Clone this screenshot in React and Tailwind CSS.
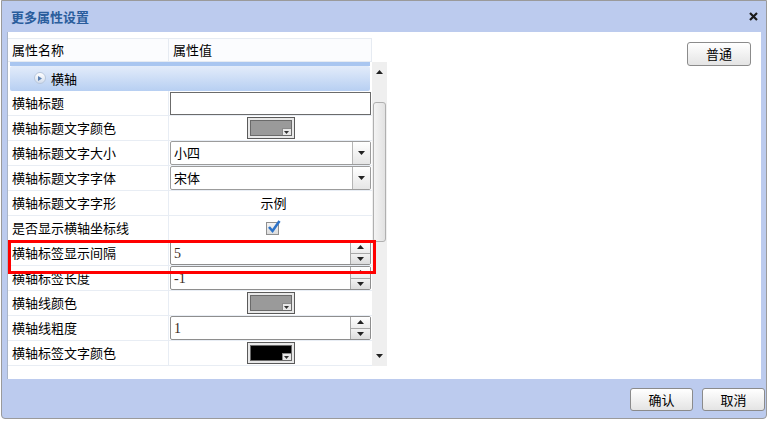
import React from "react";

const font = { fontFamily: '"Noto Sans CJK SC", "Liberation Sans", sans-serif' };

const rows = [
  { label: "横轴标题", type: "text", value: "" },
  { label: "横轴标题文字颜色", type: "color", color: "#9a9a9a" },
  { label: "横轴标题文字大小", type: "select", value: "小四" },
  { label: "横轴标题文字字体", type: "select", value: "宋体" },
  { label: "横轴标题文字字形", type: "sample", value: "示例" },
  { label: "是否显示横轴坐标线", type: "check" },
  { label: "横轴标签显示间隔", type: "spin", value: "5" },
  { label: "横轴标签长度", type: "spin", value: "-1" },
  { label: "横轴线颜色", type: "color", color: "#9a9a9a" },
  { label: "横轴线粗度", type: "spin", value: "1" },
  { label: "横轴标签文字颜色", type: "color", color: "#000000" },
];

const Tri = ({ up = false, size = 7 }) => (
  <svg width={size} height={4} viewBox="0 0 7 4">
    {up ? <path d="M0 4 L3.5 0 L7 4 Z" fill="#222" /> : <path d="M0 0 L7 0 L3.5 4 Z" fill="#222" />}
  </svg>
);

const Value = ({ row }) => {
  if (row.type === "text") {
    return <div className="h-[23px] w-full border border-[#6b6b6b] bg-white"></div>;
  }
  if (row.type === "select") {
    return (
      <div className="h-[24px] w-full flex border border-[#9c9c9c] rounded-[2px] bg-white">
        <div className="flex-1 flex items-center pl-[3px] text-[13px] text-black">{row.value}</div>
        <div className="w-[18px] border-l border-[#b5b5b5] bg-gradient-to-b from-[#ffffff] to-[#e6e6e6] flex items-center justify-center">
          <Tri />
        </div>
      </div>
    );
  }
  if (row.type === "spin") {
    return (
      <div className="h-[24px] w-full flex border border-[#8e8e8e] rounded-[2px] bg-white">
        <div
          className="flex-1 flex items-center pl-[3px] text-[14px] text-[#3a2a1a]"
          style={{ fontFamily: '"Liberation Serif", serif' }}
        >
          {row.value}
        </div>
        <div className="w-[20px] border-l border-[#a8a8a8] flex flex-col">
          <div className="flex-1 flex items-center justify-center bg-gradient-to-b from-[#ffffff] to-[#ececec] border-b border-[#a8a8a8]">
            <Tri up />
          </div>
          <div className="flex-1 flex items-center justify-center bg-gradient-to-b from-[#f2f2f2] to-[#dcdcdc]">
            <Tri />
          </div>
        </div>
      </div>
    );
  }
  if (row.type === "color") {
    return (
      <div className="w-full flex justify-center">
        <div className="w-[48px] h-[22px] border border-[#5a5a5a] bg-[#e8e8e8] p-[2px]">
          <div className="relative w-full h-full border border-[#6a6a6a]" style={{ background: row.color }}>
            <div className="absolute right-0 bottom-0 w-[9px] h-[7px] bg-[#e8e8e8] border-l border-t border-[#8a8a8a] flex items-center justify-center">
              <svg width="5" height="3" viewBox="0 0 5 3">
                <path d="M0 0 L5 0 L2.5 3 Z" fill="#333" />
              </svg>
            </div>
          </div>
        </div>
      </div>
    );
  }
  if (row.type === "sample") {
    return <div className="w-full text-center text-[13px] text-black pl-[6px]">{row.value}</div>;
  }
  return (
    <div className="w-full flex justify-center pl-[4px]">
      <div className="relative w-[13px] h-[13px] border border-[#8f8f8f] bg-gradient-to-b from-[#f4f4f4] to-[#dcdcdc]">
        <svg className="absolute left-[0px] top-[-3px]" width="14" height="14" viewBox="0 0 14 14">
          <path d="M2 7 L5.5 11 L12.5 1" stroke="#2d73c8" strokeWidth="2.6" fill="none" />
        </svg>
      </div>
    </div>
  );
};

const Btn = ({ title, w = "w-[63px]", h = "h-[23px]" }) => (
  <button
    className={`${w} ${h} rounded-[3px] border border-[#8b8b8b] bg-gradient-to-b from-[#ffffff] to-[#e4e4e4] text-[13px] text-black flex items-center justify-center`}
  >
    {title}
  </button>
);

const App = () => {
  return (
    <div className="w-[768px] h-[421px] bg-white relative overflow-hidden" style={font}>
      <div className="ml-px w-[766px] h-[419px] bg-[#bccbee] border border-[#9a9a9a] rounded-b-[4px] flex flex-col">
        {/* title */}
        <div className="h-[31px] flex items-center justify-between pl-[9px] pr-[8px]">
          <span className="text-[13px] font-bold text-[#2a5d9c]">更多属性设置</span>
          <svg width="9" height="9" viewBox="0 0 9 9">
            <path d="M1 1 L8 8 M8 1 L1 8" stroke="#1a1a1a" strokeWidth="2.2" />
          </svg>
        </div>
        {/* body */}
        <div className="h-[347px] mx-[5px] bg-white flex border-l border-[#a8b4c8]">
          <div className="w-[379px] pt-[6px] flex flex-col relative">
            {/* header */}
            <div className="h-[24px] flex border-t border-b border-[#e6ebf2] bg-[#fbfcfe] text-[13px] text-black w-[364px]">
              <div className="w-[161px] pl-[4px] flex items-center border-r border-[#e6ebf2]">属性名称</div>
              <div className="flex-1 pl-[4px] flex items-center border-r border-[#e6ebf2]">属性值</div>
            </div>
            <div className="h-[304px] flex overflow-hidden">
              <div className="w-[364px] flex flex-col">
                <div className="h-[4px] mx-[2px] bg-[#a9c6f0]"></div>
                <div className="h-[26px] mx-[2px] rounded-[2px] bg-gradient-to-b from-[#e3ecfa] to-[#b7cff2] flex items-center pl-[24px] gap-[5px] text-[13px] text-black">
                  <div className="w-[12px] h-[12px] rounded-full bg-gradient-to-b from-[#ffffff] to-[#d3ddec] border border-[#b8c7dc] flex items-center justify-center">
                    <svg width="4" height="5" viewBox="0 0 4 5">
                      <path d="M0 0 L4 2.5 L0 5 Z" fill="#5a7fb0" />
                    </svg>
                  </div>
                  横轴
                </div>
                {rows.map((row, i) => (
                  <div key={i} className="h-[25px] shrink-0 flex border-b border-[#e8edf4]">
                    <div className="w-[161px] pl-[4px] flex items-center text-[13px] text-black border-r border-[#e8edf4]">
                      {row.label}
                    </div>
                    <div className="flex-1 flex items-center pl-[1px] pr-[1px]">
                      <Value row={row} />
                    </div>
                  </div>
                ))}
              </div>
              {/* scrollbar */}
              <div className="w-[15px] bg-[#efefef] flex flex-col items-center">
                <div className="h-[20px] flex items-center justify-center">
                  <svg width="7" height="4" viewBox="0 0 7 4">
                    <path d="M0 4 L3.5 0 L7 4 Z" fill="#222" />
                  </svg>
                </div>
                <div className="mt-[20px] w-[13px] h-[140px] rounded-[3px] border border-[#b0b0b0] bg-gradient-to-r from-[#f4f4f4] to-[#e2e2e2]"></div>
                <div className="flex-1"></div>
                <div className="h-[20px] flex items-center justify-center">
                  <svg width="7" height="4" viewBox="0 0 7 4">
                    <path d="M0 0 L7 0 L3.5 4 Z" fill="#222" />
                  </svg>
                </div>
              </div>
            </div>
            {/* highlight */}
            <div className="absolute left-[0px] top-[208px] w-[368px] h-[34px] border-[3px] border-[#ff0000]"></div>
          </div>
          <div className="flex-1 flex justify-end pt-[10px] pr-[10px]">
            <Btn title="普通" w="w-[64px]" h="h-[24px]" />
          </div>
        </div>
        {/* footer */}
        <div className="flex-1 flex justify-end items-start pt-[9px] pr-[1px] gap-[9px]">
          <Btn title="确认" />
          <Btn title="取消" />
        </div>
      </div>
    </div>
  );
};

export default App;
